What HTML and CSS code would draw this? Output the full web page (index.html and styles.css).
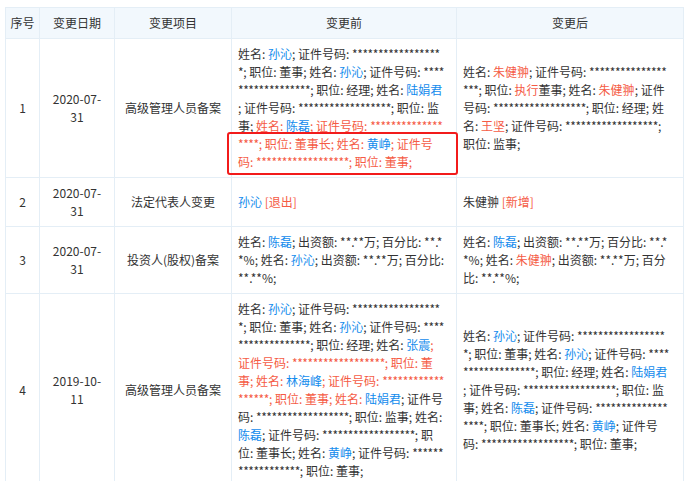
FILE: index.html
```html
<!DOCTYPE html>
<html lang="zh-CN">
<head>
<meta charset="utf-8">
<title>变更记录</title>
<link rel="stylesheet" href="styles.css">
</head>
<body>
<div class="page">
  <table class="changes">
    <colgroup>
      <col class="c-no"><col class="c-date"><col class="c-item"><col class="c-before"><col class="c-after">
    </colgroup>
    <thead>
      <tr><th class="no">序号</th><th>变更日期</th><th>变更项目</th><th>变更前</th><th>变更后</th></tr>
    </thead>
    <tbody>
      <tr>
        <td class="no">1</td>
        <td class="date">2020-07-31</td>
        <td>高级管理人员备案</td>
        <td class="txt before">姓名: <span class="n">孙沁</span>; 证件号码: <span class="mask">******************</span>; 职位: 董事; 姓名: <span class="n">孙沁</span>; 证件号码: <span class="mask">******************</span>; 职位: 经理; 姓名: <span class="n">陆娟君</span>; 证件号码: <span class="mask">******************</span>; 职位: 监事; <span class="r">姓名: </span><span class="n">陈磊</span><span class="r">; 证件号码: <span class="mask">******************</span>; 职位: 董事长; 姓名: </span><span class="n">黄峥</span><span class="r">; 证件号码: <span class="mask">******************</span>; 职位: 董事;</span></td>
        <td class="txt after">姓名: <span class="r">朱健翀</span>; 证件号码: <span class="mask">******************</span>; 职位: <span class="r">执行</span>董事; 姓名: <span class="r">朱健翀</span>; 证件号码: <span class="mask">******************</span>; 职位: 经理; 姓名: <span class="r">王坚</span>; 证件号码: <span class="mask">******************</span>; 职位: 监事;</td>
      </tr>
      <tr>
        <td class="no">2</td>
        <td class="date">2020-07-31</td>
        <td>法定代表人变更</td>
        <td class="txt before"><span class="n">孙沁</span> <span class="r">[退出]</span></td>
        <td class="txt after">朱健翀 <span class="r">[新增]</span></td>
      </tr>
      <tr>
        <td class="no">3</td>
        <td class="date">2020-07-31</td>
        <td>投资人(股权)备案</td>
        <td class="txt before">姓名: <span class="n">陈磊</span>; 出资额: **.**万; 百分比: **.**%; 姓名: <span class="n">孙沁</span>; 出资额: **.**万; 百分比: **.**%;</td>
        <td class="txt after">姓名: <span class="n">陈磊</span>; 出资额: **.**万; 百分比: **.**%; 姓名: <span class="r">朱健翀</span>; 出资额: **.**万; 百分比: **.**%;</td>
      </tr>
      <tr>
        <td class="no">4</td>
        <td class="date">2019-10-11</td>
        <td>高级管理人员备案</td>
        <td class="txt before">姓名: <span class="n">孙沁</span>; 证件号码: <span class="mask">******************</span>; 职位: 董事; 姓名: <span class="n">孙沁</span>; 证件号码: <span class="mask">******************</span>; 职位: 经理; 姓名: <span class="n">张震</span><span class="r">; 证件号码: <span class="mask">******************</span>; 职位: 董事; 姓名: </span><span class="n">林海峰</span><span class="r">; 证件号码: <span class="mask">******************</span>; 职位: 董事; 姓名: </span><span class="n">陆娟君</span>; 证件号码: <span class="mask">******************</span>; 职位: 监事; 姓名: <span class="n">陈磊</span>; 证件号码: <span class="mask">******************</span>; 职位: 董事长; 姓名: <span class="n">黄峥</span>; 证件号码: <span class="mask">******************</span>; 职位: 董事;</td>
        <td class="txt after">姓名: <span class="n">孙沁</span>; 证件号码: <span class="mask">******************</span>; 职位: 董事; 姓名: <span class="n">孙沁</span>; 证件号码: <span class="mask">******************</span>; 职位: 经理; 姓名: <span class="n">陆娟君</span>; 证件号码: <span class="mask">******************</span>; 职位: 监事; 姓名: <span class="n">陈磊</span>; 证件号码: <span class="mask">******************</span>; 职位: 董事长; 姓名: <span class="n">黄峥</span>; 证件号码: <span class="mask">******************</span>; 职位: 董事;</td>
      </tr>
    </tbody>
  </table>
  <div class="mark"></div>
</div>
</body>
</html>
```
FILE: styles.css
```css
html, body {
  margin: 0;
  background: #fff;
}
body {
  font-family: "Noto Sans CJK SC", "Liberation Sans", sans-serif;
  font-size: 12px;
  color: #333;
}
.page {
  position: relative;
  padding: 7px 7px 0 5px;
}
.changes {
  width: 678px;
  border-collapse: collapse;
  table-layout: fixed;
}
.c-no { width: 34px; }
.c-date { width: 75px; }
.c-item { width: 117px; }
.c-before { width: 225px; }
.c-after { width: 227px; }
.changes th,
.changes td {
  border: 1px solid #e4eef6;
  padding: 6px 6px;
  line-height: 18px;
  text-align: center;
  vertical-align: middle;
  font-weight: normal;
}
.changes th {
  background: #f2f8fd;
}
.changes .no {
  padding-left: 2px;
  padding-right: 2px;
}
.changes td.date {
  padding-left: 10px;
  padding-right: 10px;
}
.changes td.txt {
  text-align: left;
  word-break: break-all;
  line-break: anywhere;
}
.changes td.before {
  padding-right: 11.6px;
}
.changes td.after {
  padding-right: 13.6px;
}
.mask {
  letter-spacing: -0.45px;
}
.n { color: #128bed; }
.r { color: #f55b45; }
.mark {
  position: absolute;
  left: 227px;
  top: 132px;
  width: 227px;
  height: 39px;
  border: 2px solid #f21b1b;
  border-radius: 3px;
}
```
